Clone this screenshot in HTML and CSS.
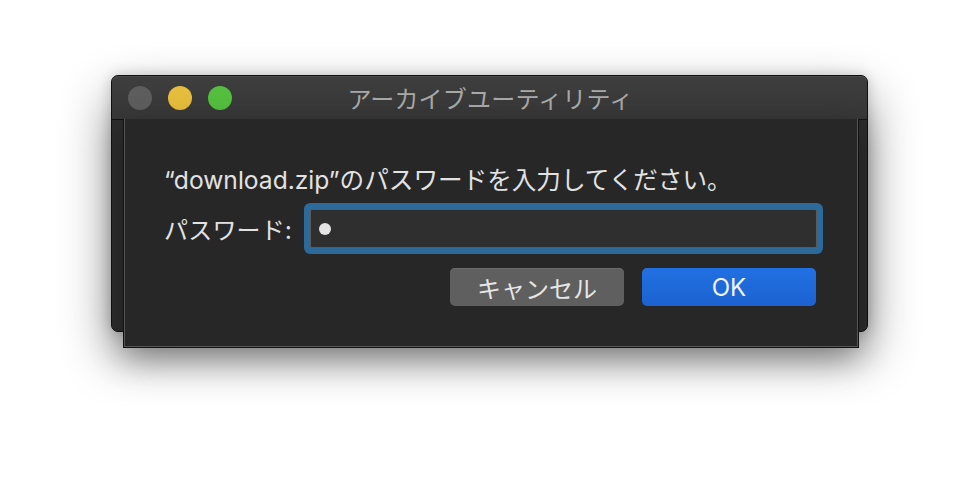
FILE: index.html
```html
<!DOCTYPE html>
<html lang="ja">
<head>
<meta charset="utf-8">
<title>アーカイブユーティリティ</title>
<link rel="stylesheet" href="styles.css">
</head>
<body>
<div class="window">
  <div class="titlebar">
    <div class="lights">
      <span class="light gray"></span>
      <span class="light yellow"></span>
      <span class="light green"></span>
    </div>
    <div class="title">アーカイブユーティリティ</div>
  </div>
  <div class="wbody"></div>
  <div class="sheet">
    <p class="message">“download.zip”のパスワードを入力してください。</p>
    <div class="row">
      <label class="label">パスワード:</label>
      <div class="field"><span class="dot"></span></div>
    </div>
    <div class="buttons">
      <button class="btn cancel">キャンセル</button>
      <button class="btn ok">OK</button>
    </div>
  </div>
</div>
</body>
</html>
```
FILE: styles.css
```css
html, body {
  margin: 0;
  padding: 0;
  background: #ffffff;
}
body {
  width: 980px;
  height: 480px;
  overflow: hidden;
  padding: 75px 0 0 111px;
  box-sizing: border-box;
  font-family: "Inter", "Noto Sans CJK JP", sans-serif;
}
.window {
  position: relative;
  width: 757px;
  height: 257px;
  box-sizing: border-box;
  border: 1px solid #101010;
  border-radius: 7px;
  background: #2c2c2c;
  box-shadow: 0 22px 50px rgba(0,0,0,0.45), 0 0 14px rgba(0,0,0,0.18);
  display: flex;
  flex-direction: column;
}
.titlebar {
  height: 43px;
  flex: none;
  display: flex;
  align-items: center;
  position: relative;
  background: linear-gradient(#3e3e3e, #373737);
  border-bottom: 1px solid #121212;
  border-radius: 6px 6px 0 0;
  box-shadow: inset 0 1px 0 #4a4a4a;
}
.lights {
  display: flex;
  gap: 16px;
  padding-left: 16px;
}
.light {
  width: 24px;
  height: 24px;
  border-radius: 50%;
  display: block;
}
.gray { background: #5d5d5d; }
.yellow { background: #e5bc3b; }
.green { background: #54be3f; }
.title {
  position: absolute;
  left: 0;
  right: 0;
  top: 0;
  bottom: 0;
  display: flex;
  align-items: center;
  justify-content: center;
  font-family: "Noto Sans CJK JP", sans-serif;
  font-size: 24px;
  color: #a8a8a8;
  letter-spacing: 0.2px;
  padding-left: 2px;
}
.wbody {
  flex: 1;
  border-radius: 0 0 6px 6px;
}
.sheet {
  position: absolute;
  left: 11px;
  top: 43px;
  width: 736px;
  height: 229px;
  box-sizing: border-box;
  background: #272727;
  border: 1px solid #111;
  border-top: none;
  box-shadow: inset 1px 0 0 #565656, inset -1px 0 0 #565656, inset 0 -1px 0 #565656, 0 10px 30px rgba(0,0,0,0.3);
  padding: 46px 36px 0 40px;
  display: flex;
  flex-direction: column;
}
.message {
  margin: 0;
  font-size: 24.6px;
  line-height: 30px;
  color: #e2e2e2;
  white-space: nowrap;
}
.row {
  display: flex;
  align-items: center;
  justify-content: space-between;
  margin-top: 14px;
  padding-right: 5px;
}
.label {
  font-family: "Noto Sans CJK JP", sans-serif;
  font-size: 24px;
  color: #e2e2e2;
  line-height: 30px;
  letter-spacing: 0.2px;
}
.field {
  flex: none;
  width: 507px;
  height: 39px;
  box-sizing: border-box;
  background: #2f2f2f;
  border: 1px solid #5a5a5a;
  box-shadow: 0 0 0 6px #2b6a9a;
  border-radius: 2px;
  display: flex;
  align-items: center;
  padding-left: 8px;
}
.dot {
  width: 12px;
  height: 12px;
  border-radius: 50%;
  background: #e4e4e4;
}
.buttons {
  display: flex;
  justify-content: flex-end;
  gap: 18px;
  margin-top: 20px;
  padding-right: 6px;
}
.btn {
  width: 174px;
  height: 38px;
  border: none;
  border-radius: 5px;
  font-family: "Inter", "Noto Sans CJK JP", sans-serif;
  font-size: 24px;
  color: #e6e6e6;
  padding: 0;
}
.cancel {
  background: #5f5f5f;
  box-shadow: inset 0 1px 0 #6a6a6a;
  font-family: "Noto Sans CJK JP", sans-serif;
}
.ok {
  background: linear-gradient(#2170e2, #1c62d0);
  color: #f2f2f2;
}
```
